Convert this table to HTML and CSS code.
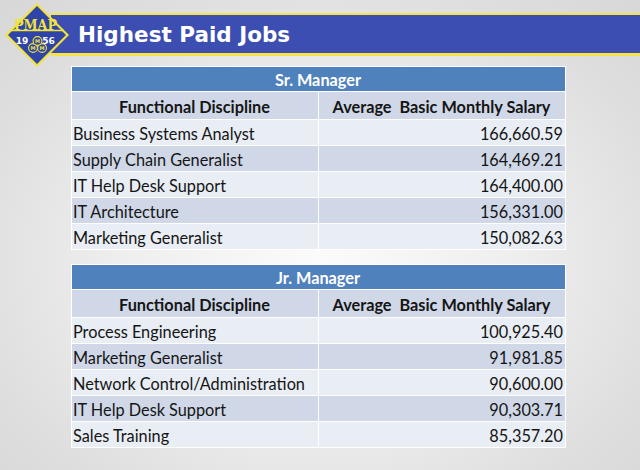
FILE: index.html
```html
<!DOCTYPE html>
<html>
<head>
<meta charset="utf-8">
<link rel="stylesheet" href="styles.css">
</head>
<body>
<div class="slide">
  <header class="head">
    <svg class="logo" width="66" height="66" viewBox="0 0 66 66">
      <polygon points="33,1 65,33 33,65 1,33" fill="#f2e33c"/>
      <polygon points="33,4 62,33 33,62 4,33" fill="#2f44a8"/>
      <line x1="6" y1="28.5" x2="60" y2="28.5" stroke="#f2e33c" stroke-width="1.4"/>
      <text x="10" y="28" textLength="43" lengthAdjust="spacingAndGlyphs" class="pmap">PMAP</text>
      <text x="18" y="42" text-anchor="middle" class="yr">19</text>
      <text x="44.5" y="42" text-anchor="middle" class="yr">56</text>
      <g fill="#2f44a8" stroke="#f2e33c" stroke-width="1.1">
        <circle cx="29" cy="46" r="4.4"/>
        <circle cx="38" cy="46" r="4.4"/>
        <circle cx="33.5" cy="39" r="4.4"/>
      </g>
      <text x="33.5" y="41" text-anchor="middle" class="m">M</text>
      <text x="29" y="48" text-anchor="middle" class="m">M</text>
      <text x="38" y="48" text-anchor="middle" class="m">M</text>
    </svg>
    <div class="banner"><h1 class="title">Highest Paid Jobs</h1></div>
  </header>

  <table class="jobs">
    <tr class="cap"><th colspan="2">Sr. Manager</th></tr>
    <tr class="hdr"><th>Functional Discipline</th><th>Average&nbsp; Basic Monthly Salary</th></tr>
    <tr class="odd"><td>Business Systems Analyst</td><td class="num">166,660.59</td></tr>
    <tr class="even"><td>Supply Chain Generalist</td><td class="num">164,469.21</td></tr>
    <tr class="odd"><td>IT Help Desk Support</td><td class="num">164,400.00</td></tr>
    <tr class="even"><td>IT Architecture</td><td class="num">156,331.00</td></tr>
    <tr class="odd"><td>Marketing Generalist</td><td class="num">150,082.63</td></tr>
  </table>

  <table class="jobs second">
    <tr class="cap"><th colspan="2">Jr. Manager</th></tr>
    <tr class="hdr"><th>Functional Discipline</th><th>Average&nbsp; Basic Monthly Salary</th></tr>
    <tr class="odd"><td>Process Engineering</td><td class="num">100,925.40</td></tr>
    <tr class="even"><td>Marketing Generalist</td><td class="num">91,981.85</td></tr>
    <tr class="odd"><td>Network Control/Administration</td><td class="num">90,600.00</td></tr>
    <tr class="even"><td>IT Help Desk Support</td><td class="num">90,303.71</td></tr>
    <tr class="odd"><td>Sales Training</td><td class="num">85,357.20</td></tr>
  </table>
</div>
</body>
</html>
```
FILE: styles.css
```css
html, body {
  margin: 0;
  padding: 0;
}
body {
  width: 640px;
  height: 470px;
  overflow: hidden;
  background: radial-gradient(ellipse 70% 75% at 50% 55%, #fbfbfb 0%, #eeeeee 45%, #dedede 80%, #d8d8d8 100%);
  font-family: "Lato", "Liberation Sans", sans-serif;
  color: #151515;
}
.slide {
  width: 640px;
  height: 470px;
  display: flex;
  flex-direction: column;
}
.head {
  position: relative;
  padding-top: 13px;
}
.logo {
  position: absolute;
  left: 4px;
  top: 2px;
}
.pmap {
  font-family: "DejaVu Serif", serif;
  font-weight: bold;
  font-size: 14px;
  fill: #f2e33c;
}
.yr {
  font-family: "DejaVu Sans", sans-serif;
  font-weight: bold;
  font-size: 9px;
  fill: #ffffff;
}
.m {
  font-family: "DejaVu Sans", sans-serif;
  font-weight: bold;
  font-size: 5px;
  fill: #f2e33c;
}
.banner {
  margin-left: 51px;
  height: 38px;
  background: #3c4eb1;
  border-top: 2px solid #f4e447;
  border-bottom: 3px solid #f4e447;
  display: flex;
  align-items: center;
  padding-left: 27px;
}
.title {
  margin: 0;
  font-family: "DejaVu Sans", sans-serif;
  font-weight: bold;
  font-size: 21.5px;
  color: #ffffff;
  line-height: 1;
  padding-top: 2px;
}
.jobs {
  border-collapse: collapse;
  width: 495px;
  margin-left: 71px;
  margin-top: 10px;
  table-layout: fixed;
  font-size: 16.3px;
}
.jobs.second {
  margin-top: 14px;
}
.jobs th, .jobs td {
  border: 1px solid #ffffff;
  padding: 2px 2px 0 1px;
  height: 23px;
  line-height: 23px;
  white-space: nowrap;
}
.cap th {
  background: #4f81bd;
  color: #ffffff;
  font-weight: bold;
  text-align: center;
  height: 22px;
  line-height: 22px;
}
.hdr th {
  background: #d0d8e8;
  font-weight: bold;
  text-align: center;
  padding-top: 3px;
  height: 23px;
  line-height: 24px;
}
.odd td {
  background: #e9edf4;
}
.even td {
  background: #d0d8e8;
}
.num {
  text-align: right;
}
```
